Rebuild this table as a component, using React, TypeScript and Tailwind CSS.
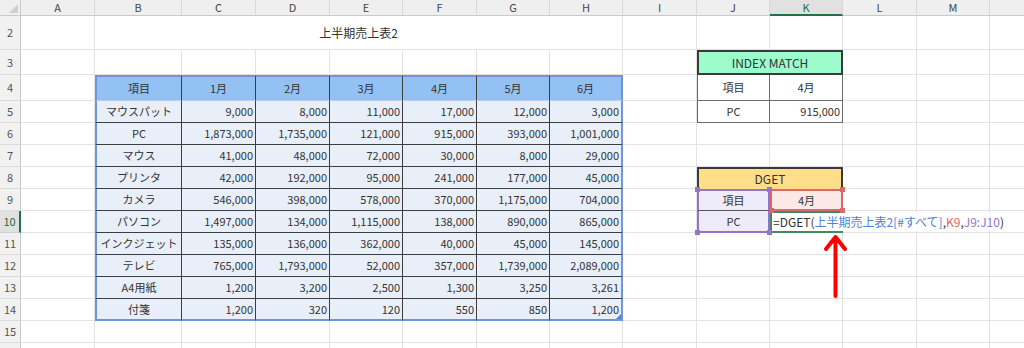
import React from "react"

// column widths: row header, A .. M, N (rest)
const W = [
  "w-[21px]",
  "w-[74px]",
  "w-[87px]",
  "w-[74px]",
  "w-[74px]",
  "w-[73px]",
  "w-[74px]",
  "w-[73px]",
  "w-[73px]",
  "w-[74px]",
  "w-[73px]",
  "w-[73px]",
  "w-[74px]",
  "w-[73px]",
  "flex-1",
]
const LETTERS = ["", "A", "B", "C", "D", "E", "F", "G", "H", "I", "J", "K", "L", "M", ""]

const ROW_H: Record<number, string> = { 2: "h-[34px]", 3: "h-[25px]", 4: "h-[26px]" }

const HEAD = ["項目", "1月", "2月", "3月", "4月", "5月", "6月"]
const DATA: string[][] = [
  ["マウスパット", "9,000", "8,000", "11,000", "17,000", "12,000", "3,000"],
  ["PC", "1,873,000", "1,735,000", "121,000", "915,000", "393,000", "1,001,000"],
  ["マウス", "41,000", "48,000", "72,000", "30,000", "8,000", "29,000"],
  ["プリンタ", "42,000", "192,000", "95,000", "241,000", "177,000", "45,000"],
  ["カメラ", "546,000", "398,000", "578,000", "370,000", "1,175,000", "704,000"],
  ["パソコン", "1,497,000", "134,000", "1,115,000", "138,000", "890,000", "865,000"],
  ["インクジェット", "135,000", "136,000", "362,000", "40,000", "45,000", "145,000"],
  ["テレビ", "765,000", "1,793,000", "52,000", "357,000", "1,739,000", "2,089,000"],
  ["A4用紙", "1,200", "3,200", "2,500", "1,300", "3,250", "3,261"],
  ["付箋", "1,200", "320", "120", "550", "850", "1,200"],
]

const GRID = "shrink-0 border-r border-b border-[#e2e2e2]"
const TXT = "flex items-center text-[11px] text-[#333] leading-none"

type Spec = { cls: string; w?: string; span?: number; content?: React.ReactNode }

function tableCell(r: number, c: number): Spec {
  const head = r === 4
  const text = head ? HEAD[c - 2] : DATA[r - 5][c - 2]
  const bg = head ? "bg-[#94c1f4]" : "bg-[#e9eff9]"
  const right = c === 8 ? "border-r-2 border-r-[#6d95d8]" : "border-r border-r-[#3d3d3d]"
  const bottom =
    r === 14 ? "border-b-2 border-b-[#6d95d8]" : head ? "border-b border-b-[#b9cde9]" : "border-b border-b-[#3d3d3d]"
  const top = head ? "border-t-2 border-t-[#6d95d8]" : ""
  const left = c === 2 ? "border-l-2 border-l-[#6d95d8]" : ""
  const align = head || c === 2 ? "justify-center" : "justify-end pr-[2px]"
  return {
    cls: `relative shrink-0 ${TXT} ${bg} ${right} ${bottom} ${top} ${left} ${align}`,
    content: (
      <>
        {text}
        {r === 14 && c === 8 && (
          <svg className="absolute right-0 bottom-0" width="5" height="5" viewBox="0 0 5 5">
            <path d="M5 0 L5 5 L0 5 Z" fill="#4f7fcf" />
          </svg>
        )}
      </>
    ),
  }
}

function Corner({ cls }: { cls: string }) {
  return <span className={`absolute z-20 h-[5px] w-[5px] ${cls}`} />
}

function getCell(r: number, c: number): Spec {
  // title
  if (r === 2 && c === 2)
    return {
      w: "w-[528px]",
      span: 7,
      cls: `shrink-0 border-r border-b border-[#e2e2e2] ${TXT} justify-center text-[12px]`,
      content: "上半期売上表2",
    }
  if (r >= 4 && r <= 14 && c >= 2 && c <= 8) return tableCell(r, c)

  // INDEX MATCH
  if (r === 3 && c === 10)
    return {
      w: "w-[146px]",
      span: 2,
      cls: `shrink-0 ${TXT} justify-center text-[12px] bg-[#9cfccc] border-2 border-[#3a3a3a]`,
      content: "INDEX MATCH",
    }
  if ((r === 4 || r === 5) && c === 10)
    return {
      cls: `shrink-0 ${TXT} justify-center border-l border-r border-b border-[#6b6b6b]`,
      content: r === 4 ? "項目" : "PC",
    }
  if ((r === 4 || r === 5) && c === 11)
    return {
      cls: `shrink-0 ${TXT} border-r border-b border-[#6b6b6b] ${r === 4 ? "justify-center" : "justify-end pr-[2px]"}`,
      content: r === 4 ? "4月" : "915,000",
    }

  // DGET
  if (r === 8 && c === 10)
    return {
      w: "w-[146px]",
      span: 2,
      cls: `shrink-0 ${TXT} justify-center text-[12px] bg-[#fedd8b] border-x-2 border-t-2 border-[#3a3a3a]`,
      content: "DGET",
    }
  if (r === 9 && c === 10)
    return {
      cls: `relative shrink-0 ${TXT} justify-center bg-[#eeecf8] border-x-2 border-t-2 border-[#9572cc] border-b border-b-[#555]`,
      content: (
        <>
          項目
          <Corner cls="-left-[4px] -top-[4px] bg-[#9572cc]" />
          <Corner cls="-right-[4px] -top-[4px] bg-[#9572cc]" />
        </>
      ),
    }
  if (r === 10 && c === 10)
    return {
      cls: `relative shrink-0 ${TXT} justify-center bg-[#eeecf8] border-x-2 border-b-2 border-[#9572cc]`,
      content: (
        <>
          PC
          <Corner cls="-left-[4px] -bottom-[4px] bg-[#9572cc]" />
          <Corner cls="-right-[4px] -bottom-[4px] bg-[#9572cc]" />
        </>
      ),
    }
  if (r === 9 && c === 11)
    return {
      cls: `relative shrink-0 ${TXT} justify-center bg-[#fae9e7] border-2 border-[#dc6868]`,
      content: (
        <>
          4月
          <Corner cls="-right-[4px] -top-[4px] bg-[#dc6868]" />
          <Corner cls="-right-[4px] -bottom-[4px] bg-[#dc6868]" />
          <Corner cls="-left-[3px] -bottom-[4px] bg-[#dc6868]" />
        </>
      ),
    }
  if (r === 10 && c === 11)
    return {
      cls: "relative z-10 shrink-0 flex items-stretch border-2 border-[#3f8a5e]",
      content: (
        <span className="flex shrink-0 items-center whitespace-nowrap bg-white pl-[1px] pr-[4px] text-[12px] leading-none text-[#333]">
          =DGET(
          <span className="text-[#4f82d3]">上半期売上表2[#すべて]</span>,
          <span className="text-[#e06464]">K9</span>,
          <span className="text-[#9572cc]">J9:J10</span>)
        </span>
      ),
    }

  if (c === 14) return { cls: "flex-1 border-b border-[#e2e2e2]" }
  return { cls: GRID }
}

function Row({ r }: { r: number }) {
  const h = ROW_H[r] ?? "h-[22px]"
  const cells: React.ReactNode[] = []
  let c = 1
  while (c <= 14) {
    const s = getCell(r, c)
    cells.push(
      <div key={c} className={`${s.w ?? W[c]} ${s.cls}`}>
        {s.content}
      </div>
    )
    c += s.span ?? 1
  }
  const active = r === 10
  return (
    <div className={`flex ${h}`}>
      <div
        className={`w-[21px] shrink-0 flex items-center justify-center border-b text-[11px] leading-none ${
          active
            ? "bg-[#e1e1e1] text-[#1e6b40] border-r-2 border-r-[#217346] border-b-[#d0d0d0]"
            : "bg-[#f1f1f1] text-[#555] border-r border-r-[#c9c9c9] border-b-[#dcdcdc]"
        }`}
      >
        {r < 16 ? r : null}
      </div>
      {cells}
    </div>
  )
}

export default function App() {
  const rows = [2, 3, 4, 5, 6, 7, 8, 9, 10, 11, 12, 13, 14, 15, 16]
  return (
    <div className="relative h-[348px] w-[1024px] overflow-hidden bg-white font-['Noto_Sans_CJK_JP','Noto_Sans',sans-serif]">
      {/* column headers */}
      <div className="flex h-[16px] bg-[#efefef]">
        <div className="relative w-[21px] shrink-0 border-r border-b border-[#c9c9c9]">
          <svg className="absolute right-[2px] bottom-[2px]" width="9" height="9" viewBox="0 0 9 9">
            <path d="M9 0 L9 9 L0 9 Z" fill="#d0d0d0" />
          </svg>
        </div>
        {LETTERS.slice(1).map((l, i) => {
          const c = i + 1
          const active = l === "K"
          return (
            <div
              key={c}
              className={`${W[c]} ${c < 14 ? "shrink-0 border-r" : ""} flex items-center justify-center text-[11px] leading-none border-r-[#d8d8d8] ${
                active
                  ? "bg-[#e1e1e1] text-[#1e6b40] border-b-2 border-b-[#217346]"
                  : "text-[#444] border-b border-b-[#c9c9c9]"
              }`}
            >
              {l}
            </div>
          )
        })}
      </div>
      {rows.map((r) => (
        <Row key={r} r={r} />
      ))}
      {/* red arrow annotation */}
      <svg className="absolute left-[822px] top-[230px]" width="28" height="72" viewBox="0 0 28 72">
        <path
          d="M4 19 L13.5 7 L23 19 M13.5 7 L13.5 66"
          fill="none"
          stroke="#ff0000"
          strokeWidth="4"
          strokeLinecap="round"
          strokeLinejoin="round"
        />
      </svg>
    </div>
  )
}
